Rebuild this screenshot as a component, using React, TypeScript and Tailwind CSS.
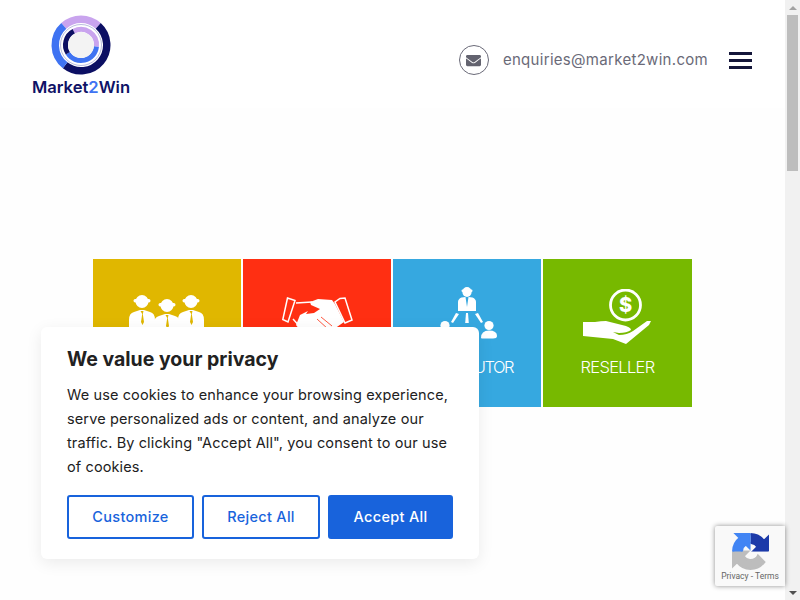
import type { ReactNode } from "react";
import { FaEnvelope } from "react-icons/fa";

function arc(cx: number, cy: number, r: number, a0: number, a1: number) {
  const p = (a: number) => {
    const t = ((a - 90) * Math.PI) / 180;
    return `${(cx + r * Math.cos(t)).toFixed(2)} ${(cy + r * Math.sin(t)).toFixed(2)}`;
  };
  return `M${p(a0)} A${r} ${r} 0 ${a1 - a0 > 180 ? 1 : 0} 1 ${p(a1)}`;
}

function Logo() {
  return (
    <div className="flex flex-col items-center w-[100px]">
      <svg width="60" height="60" viewBox="0 0 60 60" className="block">
        <g fill="none">
          <path d={arc(30, 30, 25.75, -42, 42)} stroke="#c9a4ee" strokeWidth="7.5" />
          <path d={arc(30, 30, 25.75, 42, 218)} stroke="#0c0f63" strokeWidth="7.5" />
          <path d={arc(30, 30, 25.75, 218, 318)} stroke="#3f73f2" strokeWidth="7.5" />
          <circle cx="30" cy="30" r="20.5" stroke="#8d90c8" strokeWidth="0.6" />
          <path d={arc(30, 30, 15.5, -28, 96)} stroke="#c9a4ee" strokeWidth="5" />
          <path d={arc(30, 30, 15.5, 96, 238)} stroke="#3f73f2" strokeWidth="5" />
          <path d={arc(30, 30, 15.5, 238, 332)} stroke="#0c0f63" strokeWidth="5" />
        </g>
        <circle cx="30" cy="30" r="13" fill="#f3f3f3" />
      </svg>
      <div className="mt-[2px] text-[16.6px] leading-[20px] font-semibold text-[#0f1266] font-['Inter',sans-serif] whitespace-nowrap">
        Market<span className="text-[#3f73f2]">2</span>Win
      </div>
    </div>
  );
}

function PeopleIcon() {
  const gold = "#e0b700";
  const Person = ({ x, y }: { x: number; y: number }) => (
    <g transform={`translate(${x} ${y})`}>
      <ellipse cx="0" cy="6.5" rx="6.5" ry="6.5" fill="#fff" />
      <rect x="-8.5" y="4" width="17" height="3.5" rx="1.7" fill="#fff" />
      <path d="M-8 17 Q-13 18 -13 25 L-13 40 L13 40 L13 25 Q13 18 8 17 L2 15 L-2 15Z" fill="#fff" />
      <path d="M-1.5 16 h3 l-.7 3 l1.2 8 l-1.5 3 l-1.5 -3 l1.2 -8z" fill={gold} />
    </g>
  );
  return (
    <svg width="76" height="40" viewBox="0 0 76 40">
      <Person x={13} y={0} />
      <Person x={62} y={0} />
      <Person x={38} y={4} />
    </svg>
  );
}

function HandshakeIcon() {
  return (
    <svg width="71" height="38" viewBox="0 0 71 38">
      <path d="M5.5 1 L13 3.5 L6 25 L0.8 22.5Z" fill="none" stroke="#fff" strokeWidth="1.5" />
      <path d="M58 1.5 L63 1 L70 23 L63 26 L53 5Z" fill="none" stroke="#fff" strokeWidth="1.5" />
      <path d="M14 6 L30 5 M11 22 L20 32" fill="none" stroke="#fff" strokeWidth="1.5" />
      <path d="M28 5 L36 2 L50 3 L53 7 L62 25 L52 32 L40 38 L22 38 L14 28 L18 18 L26 14 L24 17 L32 16 L38 12 L29 8Z" fill="#fff" />
      <path d="M35 22 L46 32 M39 20 L50 29" stroke="#ff2f12" strokeWidth="0.8" />
    </svg>
  );
}

function DistributorIcon() {
  return (
    <svg width="64" height="52" viewBox="0 0 64 52" fill="#fff">
      <ellipse cx="32" cy="5" rx="4.6" ry="5" />
      <rect x="26.5" y="2.5" width="11" height="2.5" rx="1.2" />
      <path d="M26.5 10.5 L30.5 10 L32 20 L33.5 10 L37.5 10.5 Q41 12 41 15 L41 24 L23 24 L23 15 Q23 12 26.5 10.5Z" />
      <path d="M31 26 h2 l.8 10 h-3.6Z" />
      <path d="M21 26 L24 27 L18 36 L16 35Z" />
      <path d="M43 26 L40 27 L46 36 L48 35Z" />
      <circle cx="10" cy="38.5" r="4.6" />
      <path d="M2 52 Q2 44 10 44 Q18 44 18 52Z" />
      <circle cx="54" cy="38.5" r="4.6" />
      <path d="M46 51 Q46 43.5 54 43.5 Q62 43.5 62 49 Q62 51.5 58 51.5 L50 51.5 Q46 51.5 46 51Z" />
    </svg>
  );
}

function ResellerIcon() {
  return (
    <svg width="69" height="57" viewBox="0 0 69 57">
      <circle cx="42.5" cy="16" r="15" fill="none" stroke="#fff" strokeWidth="2.8" />
      <text x="42.5" y="23" textAnchor="middle" fontSize="20" fontWeight="800" fill="#fff" fontFamily="Inter, sans-serif">$</text>
      <path d="M0 33 Q6 33 12 33 Q18 32 23 32 L39 36 Q48 38 48 41 Q44 44 36 44 L30 43 L36 46 Q44 46 50 42 L64 32 L68 32 L66 36 L43 55 L30 50 L0 47Z" fill="#fff" />
    </svg>
  );
}

const RC_PATH =
  "M64 32l-.01-1.37V5.37l-7.1 7.1A31.9 31.9 0 0 0 32.01 .01c-10.35 0-19.54 4.94-25.35 12.59l11.64 11.76a15.5 15.5 0 0 1 4.7-5.27c2.03-1.59 4.91-2.89 8.99-2.89.5 0 .88.06 1.16.16a15.6 15.6 0 0 1 11.9 7.12l-8.24 8.24c10.44-.04 22.23-.06 27.69.01z";

function RecaptchaLogo() {
  return (
    <svg width="37" height="37" viewBox="-2 -2 68 68">
      <defs>
        <clipPath id="rc-tr"><rect x="32" y="-2" width="34" height="34" /></clipPath>
        <clipPath id="rc-tl"><rect x="-2" y="-2" width="34" height="34" /></clipPath>
      </defs>
      <path d={RC_PATH} fill="#bdbdbd" stroke="#bdbdbd" strokeWidth="4" transform="rotate(180 32 32)" />
      <g clipPath="url(#rc-tr)"><path d={RC_PATH} fill="#1c3aa9" stroke="#1c3aa9" strokeWidth="4" /></g>
      <g clipPath="url(#rc-tl)"><path d={RC_PATH} fill="#4285f4" stroke="#4285f4" strokeWidth="4" transform="rotate(-90 32 32)" /></g>
    </svg>
  );
}

function Tile({ color, wide, label, labelClass, top, children }: { color: string; wide?: boolean; label?: string; labelClass?: string; top: string; children: ReactNode }) {
  return (
    <div className={`${color} ${wide ? "w-[149px]" : "w-[148px]"} h-[148px] flex flex-col items-center`}>
      <div className={`h-[94px] ${top} flex justify-center items-start w-full`}>{children}</div>
      {label && (
        <div className={`${labelClass} leading-[28px] text-white font-['Inter',sans-serif] font-light whitespace-nowrap`}>{label}</div>
      )}
    </div>
  );
}

export default function App() {
  return (
    <div className="relative w-[800px] h-[600px] overflow-hidden flex bg-[#fefefe] font-['Inter',sans-serif]">
      <main className="flex-1 min-w-0 flex flex-col">
        <header className="h-[108px] bg-white flex items-start pl-[31px] pr-[33px] pt-[15px]">
          <Logo />
          <div className="ml-auto mt-[30px] flex items-center">
            <div className="w-[30px] h-[30px] rounded-full border border-[#6a6a78] flex items-center justify-center text-[#63636f]">
              <FaEnvelope size={15} />
            </div>
            <a className="ml-[14px] text-[15px] leading-[30px] tracking-[0.3px] text-[#6a6a78]">enquiries@market2win.com</a>
            <div className="ml-[21px] w-[23px] flex flex-col gap-[4px]">
              <span className="h-[3px] bg-[#14163a]" />
              <span className="h-[3px] bg-[#14163a]" />
              <span className="h-[3px] bg-[#14163a]" />
            </div>
          </div>
        </header>
        <section className="mt-[151px] ml-[93px] flex gap-[2px]">
          <Tile color="bg-[#e0b700]" top="pt-[36px]"><PeopleIcon /></Tile>
          <Tile color="bg-[#ff2f12]" top="pt-[38px]"><HandshakeIcon /></Tile>
          <Tile color="bg-[#36a8e0]" top="pt-[28px]" label="DISTRIBUTOR" labelClass="text-[16.5px] tracking-[-1.4px]"><DistributorIcon /></Tile>
          <Tile color="bg-[#77b900]" top="pt-[30px]" wide label="RESELLER" labelClass="text-[16.5px] tracking-[-0.7px]"><ResellerIcon /></Tile>
        </section>
      </main>

      <aside className="w-[15px] bg-[#f1f1f1] flex flex-col items-center">
        <div className="h-[15px] flex items-center justify-center">
          <span className="w-0 h-0 border-x-[4px] border-x-transparent border-b-[4px] border-b-[#a3a3a3]" />
        </div>
        <div className="w-[11px] h-[156px] bg-[#bdbdbd]" />
        <div className="mt-auto h-[15px] flex items-center justify-center">
          <span className="w-0 h-0 border-x-[4px] border-x-transparent border-t-[4px] border-t-[#505050]" />
        </div>
      </aside>

      <div className="absolute left-[41px] top-[327px] w-[438px] h-[232px] bg-white rounded-[6px] shadow-[0_4px_16px_rgba(0,0,0,0.08)] px-[26px] pt-[18px]">
        <h2 className="text-[19.5px] leading-[28px] font-bold text-[#212121]">We value your privacy</h2>
        <p className="mt-[10px] text-[14.5px] leading-[24px] tracking-[0.12px] text-[#212121] whitespace-nowrap">
          We use cookies to enhance your browsing experience,<br />
          serve personalized ads or content, and analyze our<br />
          traffic. By clicking "Accept All", you consent to our use<br />
          of cookies.
        </p>
        <div className="mt-[16px] flex gap-[8px]">
          <button className="w-[127px] h-[44px] rounded-[3px] border-2 border-[#1863dc] text-[#1863dc] text-[14.5px] tracking-[0.3px] font-medium">Customize</button>
          <button className="w-[118px] h-[44px] rounded-[3px] border-2 border-[#1863dc] text-[#1863dc] text-[14.5px] tracking-[0.3px] font-medium">Reject All</button>
          <button className="w-[125px] h-[44px] rounded-[3px] border-2 border-[#1863dc] bg-[#1863dc] text-white text-[14.5px] tracking-[0.3px] font-medium">Accept All</button>
        </div>
      </div>

      <div className="absolute left-[715px] top-[526px] w-[70px] h-[60px] bg-[#f9f9f9] rounded-l-[2px] shadow-[0_0_5px_rgba(0,0,0,0.45)] flex flex-col items-center pt-[7px]">
        <RecaptchaLogo />
        <div className="text-[8.5px] leading-[11px] mt-[1px] text-[#666] font-['Roboto',sans-serif] whitespace-nowrap">Privacy - Terms</div>
      </div>
    </div>
  );
}
